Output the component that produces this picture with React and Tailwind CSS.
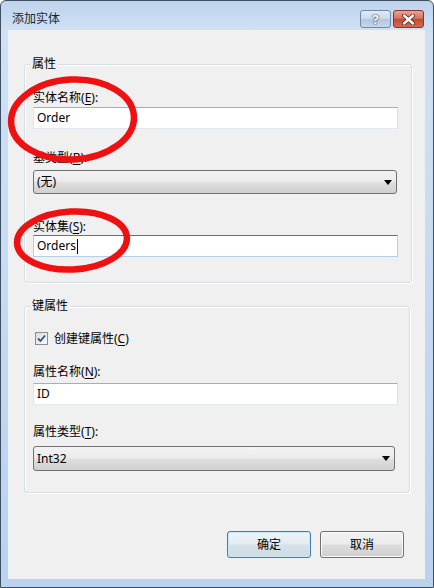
import React from 'react';

const Key = ({ children }) => <span className="underline underline-offset-2">{children}</span>;

const Label = ({ text, k, className = '' }) => (
  <div className={`h-[15px] leading-[15px] text-[12px] text-black ${className}`}>
    {text}(<Key>{k}</Key>):
  </div>
);

const TextBox = ({ value, focused, caret, className = '' }) => (
  <div
    className={`flex h-[22px] items-center border pl-[3px] text-[12px] bg-white ${
      focused
        ? 'border-[#b5cfe7] border-t-[#3d7bad]'
        : 'border-[#e3e9ef] border-t-[#abadb3] border-l-[#e2e3ea] border-r-[#dbdfe6]'
    } ${className}`}
  >
    <span>{value}</span>
    {caret && <span className="ml-px h-[15px] w-px bg-black" />}
  </div>
);

const Combo = ({ value, className = '' }) => (
  <div
    className={`flex items-center justify-between rounded-[3px] border border-[#707070] bg-[linear-gradient(to_bottom,#f3f3f3_0%,#ececec_45%,#dedede_55%,#d0d0d0_100%)] pl-[3px] pr-[4px] text-[12px] ${className}`}
  >
    <span>{value}</span>
    <svg width="8" height="5" viewBox="0 0 8 5">
      <polygon points="0,0 8,0 4,5" fill="#000" />
    </svg>
  </div>
);

const Group = ({ title, className = '', children }) => (
  <div className={`relative rounded-[3px] border border-[#d5dfe5] shadow-[inset_1px_1px_0_#fff,1px_1px_0_#fff] ${className}`}>
    <span className="absolute -top-[9px] left-[5px] bg-[#f0f0f0] px-[2px] leading-[16px] text-[12px]">{title}</span>
    {children}
  </div>
);

export default function App() {
  return (
    <div className="relative h-[588px] w-[434px] overflow-hidden rounded-t-[6px] border border-[#3d4f63] bg-[linear-gradient(to_bottom,#bed4ec_0%,#d0e1f3_30px,#bad2ee_100%)] font-['Noto_Sans','Noto_Sans_CJK_SC',sans-serif] text-black">
      {/* title bar */}
      <div className="flex h-[29px] pl-[11px] pr-[9px]">
        <span className="flex-1 pt-[10px] text-[12px] leading-[16px] text-[#1b2633]">添加实体</span>
        <div className="mt-[9px] flex gap-[2px] self-start">
          <div className="flex h-[18px] w-[31px] items-center justify-center rounded-[3px] border border-[#6f88a8] bg-[linear-gradient(to_bottom,#e2ebf5_0%,#c9d8e8_50%,#b2c6dc_51%,#c6d7ea_100%)]">
            <span className="text-[13px] font-bold leading-none text-white [text-shadow:0_0_2px_#2c3e55,0_0_1px_#2c3e55]">?</span>
          </div>
          <div className="flex h-[18px] w-[31px] items-center justify-center rounded-[3px] border border-[#83362f] bg-[linear-gradient(to_bottom,#e7a494_0%,#d57561_45%,#c44a37_52%,#d26b52_100%)]">
            <svg width="13" height="11" viewBox="0 0 13 11">
              <path d="M2 1.5 L11 9.5 M11 1.5 L2 9.5" stroke="#5a1f18" strokeWidth="4" strokeLinecap="round" />
              <path d="M2 1.5 L11 9.5 M11 1.5 L2 9.5" stroke="#fff" strokeWidth="2.4" strokeLinecap="round" />
            </svg>
          </div>
        </div>
      </div>

      {/* client area */}
      <div className="ml-[7px] h-[549px] w-[417px] border-l border-[#e9f1fa] bg-[#f0f0f0] pl-[15px] pt-[34px]">
        <Group title="属性" className="w-[388px] pb-[25px] pl-[8px] pr-[13px] pt-[25px]">
          <Label text="实体名称" k="E" />
          <TextBox value="Order" className="mt-[2px]" />
          <Label text="基类型" k="B" className="mt-[21px]" />
          <Combo value="(无)" className="mr-[1px] mt-[5px] h-[24px]" />
          <Label text="实体集" k="S" className="mt-[25px]" />
          <TextBox value="Orders" focused caret className="mt-px" />
        </Group>

        <Group title="键属性" className="mt-[23px] w-[386px] pb-[21px] pl-[8px] pr-[11px] pt-[25px]">
          <div className="flex h-[13px] items-center pl-[2px]">
            <div className="flex h-[13px] w-[13px] items-center justify-center border border-[#8e8f8f] bg-[linear-gradient(135deg,#dcdcdc,#fbfbfb)]">
              <svg width="9" height="9" viewBox="0 0 9 9">
                <path d="M1 4.5 L3.5 7 L8 1.5" fill="none" stroke="#34508a" strokeWidth="1.8" />
              </svg>
            </div>
            <span className="ml-[6px] text-[12px] leading-[15px]">
              创建键属性(<Key>C</Key>)
            </span>
          </div>
          <Label text="属性名称" k="N" className="mt-[19px]" />
          <TextBox value="ID" className="mt-[4px]" />
          <Label text="属性类型" k="T" className="mt-[19px]" />
          <Combo value="Int32" className="mr-[3px] mt-[7px] h-[25px]" />
        </Group>

        <div className="mt-[38px] flex w-[388px] justify-end gap-[9px] pr-[8px]">
          <button className="h-[27px] w-[84px] rounded-[3px] border border-[#3c7fb1] bg-[linear-gradient(to_bottom,#eef4f8_0%,#e4ecf1_48%,#d5e1e8_52%,#cfdce4_100%)] text-[12px] shadow-[inset_0_0_0_1px_#c6e8f9]">
            确定
          </button>
          <button className="h-[27px] w-[84px] rounded-[3px] border border-[#707070] bg-[linear-gradient(to_bottom,#f2f2f2_0%,#ebebeb_48%,#dddddd_52%,#cfcfcf_100%)] text-[12px] shadow-[inset_0_0_0_1px_#fbfbfb]">
            取消
          </button>
        </div>
      </div>

      {/* hand-drawn red marks over the dialog */}
      <svg className="pointer-events-none absolute left-[-1px] top-[-1px]" width="434" height="588" viewBox="0 0 434 588">
        <ellipse cx="72.5" cy="119.5" rx="61.5" ry="40" fill="none" stroke="#ee1111" strokeWidth="6.5" transform="rotate(-3 72.5 119.5)" />
        <ellipse cx="72" cy="240.5" rx="55" ry="29" fill="none" stroke="#ee1111" strokeWidth="6.5" transform="rotate(-3 72 240.5)" />
      </svg>
    </div>
  );
}
